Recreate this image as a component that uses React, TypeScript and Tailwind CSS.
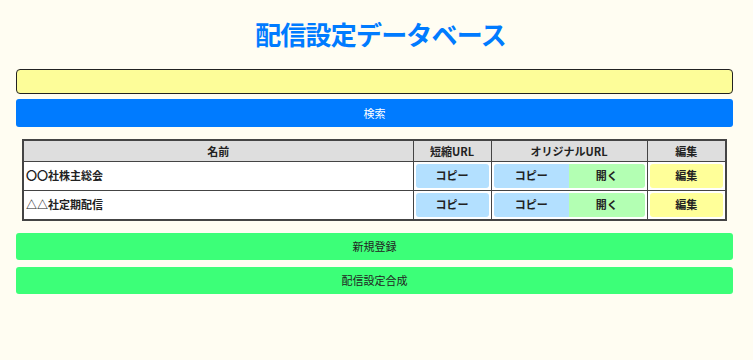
import { useState } from "react";

const rows = ["〇〇社株主総会", "△△社定期配信"];

const cellBtn = "w-full h-[24px] rounded-[3px] text-[11px] font-bold text-[#222]";

export default function App() {
  const [query, setQuery] = useState("");

  return (
    <div
      className="min-h-[360px] bg-[#fffdf2] pt-[19px] pl-4 pr-5"
      style={{ fontFamily: '"Noto Sans CJK JP", "Noto Sans", sans-serif' }}
    >
      <h1 className="text-center text-[26px] leading-[30px] font-bold text-[#007bff] tracking-[-0.8px] pl-[12px]">
        配信設定データベース
      </h1>

      {/* Search */}
      <input
        value={query}
        onChange={(e) => setQuery(e.target.value)}
        autoFocus
        className="mt-[20px] block w-full h-[25px] px-[5px] rounded-[4px] border border-[#222] bg-[#fdfd99] text-[12px] outline-none"
      />
      <button className="mt-[5px] block w-full h-[28px] rounded-[3px] bg-[#007bff] text-white text-[11px]">
        検索
      </button>

      {/* Table */}
      <div className="px-[6px] mt-[12px]">
        <table className="w-full border-collapse border-2 border-[#444] text-[11px] text-[#222]">
          <thead>
            <tr className="bg-[#dedede] h-[21px]">
              <th className="border-[1.5px] border-[#444] font-bold">名前</th>
              <th className="border-[1.5px] border-[#444] font-bold w-[78px]">短縮URL</th>
              <th className="border-[1.5px] border-[#444] font-bold w-[156px]">オリジナルURL</th>
              <th className="border-[1.5px] border-[#444] font-bold w-[79px]">編集</th>
            </tr>
          </thead>
          <tbody className="bg-white">
            {rows.map((name) => (
              <tr key={name} className="h-[28px]">
                <td className="border-[1.5px] border-[#444] px-[2px] font-bold">{name}</td>
                <td className="border-[1.5px] border-[#444] p-[2px]">
                  <button className={`${cellBtn} bg-[#b3e0ff]`}>コピー</button>
                </td>
                <td className="border-[1.5px] border-[#444] p-[2px]">
                  <div className="flex">
                    <button className={`${cellBtn} flex-1 bg-[#b3e0ff] rounded-r-none`}>コピー</button>
                    <button className={`${cellBtn} flex-1 bg-[#b3ffb3] rounded-l-none`}>開く</button>
                  </div>
                </td>
                <td className="border-[1.5px] border-[#444] p-[2px]">
                  <button className={`${cellBtn} bg-[#ffff99]`}>編集</button>
                </td>
              </tr>
            ))}
          </tbody>
        </table>
      </div>

      {/* Actions */}
      <button className="mt-[12px] block w-full h-[27px] rounded-[3px] bg-[#3cff78] text-[11px] text-[#222]">
        新規登録
      </button>
      <button className="mt-[7px] block w-full h-[27px] rounded-[3px] bg-[#3cff78] text-[11px] text-[#222]">
        配信設定合成
      </button>
    </div>
  );
}
